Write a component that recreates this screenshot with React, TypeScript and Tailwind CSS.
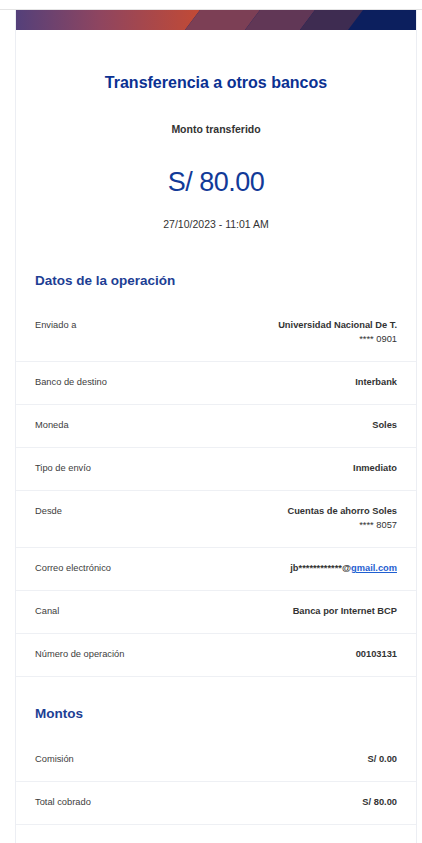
import React from "react";

type Row = { label: string; value: React.ReactNode; sub?: string };

const datos: Row[] = [
  { label: "Enviado a", value: "Universidad Nacional De T.", sub: "**** 0901" },
  { label: "Banco de destino", value: "Interbank" },
  { label: "Moneda", value: "Soles" },
  { label: "Tipo de envío", value: "Inmediato" },
  { label: "Desde", value: "Cuentas de ahorro Soles", sub: "**** 8057" },
  {
    label: "Correo electrónico",
    value: (
      <>
        jb************@
        <span className="text-[#1f5fd1] underline">gmail.com</span>
      </>
    ),
  },
  { label: "Canal", value: "Banca por Internet BCP" },
  { label: "Número de operación", value: "00103131" },
];

const montos: Row[] = [
  { label: "Comisión", value: "S/ 0.00" },
  { label: "Total cobrado", value: "S/ 80.00" },
];

function Banner() {
  return (
    <svg viewBox="0 0 400 20" preserveAspectRatio="none" className="block h-[20px] w-full">
      <defs>
        <linearGradient id="lead" x1="0" y1="0" x2="1" y2="0">
          <stop offset="0" stopColor="#54407a" />
          <stop offset="0.45" stopColor="#8e4560" />
          <stop offset="1" stopColor="#c24a35" />
        </linearGradient>
      </defs>
      <rect x="0" y="0" width="400" height="20" fill="#0c1f5e" />
      <polygon points="0,0 184,0 169,20 0,20" fill="url(#lead)" />
      <polygon points="184,0 244,0 229,20 169,20" fill="#7c3f55" />
      <polygon points="244,0 299,0 284,20 229,20" fill="#613756" />
      <polygon points="299,0 347,0 332,20 284,20" fill="#3e2c51" />
    </svg>
  );
}

function DataRow({ row }: { row: Row }) {
  return (
    <div className="flex justify-between border-b border-[#eef0f4] px-[19px] pt-[13px] pb-[15px] text-[9.3px] leading-[14px]">
      <span className="text-[#3d3d3d]">{row.label}</span>
      <div className="text-right text-[#333333]">
        <div className="font-bold">{row.value}</div>
        {row.sub && <div>{row.sub}</div>}
      </div>
    </div>
  );
}

export default function App() {
  return (
    <div className="min-h-screen bg-white font-['Liberation_Sans',Arial,sans-serif]">
      <div className="h-[10px] border-b border-[#e4e4e4]" />
      <div className="ml-[15px] w-[402px] border-x border-[#eceef3] pb-[40px]">
        <Banner />

        <div className="flex flex-col items-center">
          <h1 className="mt-[43px] text-[16px] leading-[20px] font-bold text-[#0b3192]">
            Transferencia a otros bancos
          </h1>
          <p className="mt-[29px] text-[10.5px] leading-[14px] font-bold text-[#333333]">
            Monto transferido
          </p>
          <p className="mt-[30px] text-[27px] leading-[32px] tracking-[-0.5px] text-[#123a98]">
            S/ 80.00
          </p>
          <p className="mt-[19px] text-[10.5px] leading-[14px] text-[#333333]">
            27/10/2023 - 11:01 AM
          </p>
        </div>

        <h2 className="mt-[41px] mb-[15px] px-[19px] text-[13.5px] leading-[18px] font-bold text-[#1d3e94]">
          Datos de la operación
        </h2>
        {datos.map((r) => (
          <DataRow key={r.label} row={r} />
        ))}

        <h2 className="mt-[28px] mb-[16px] px-[19px] text-[13.5px] leading-[18px] font-bold text-[#1d3e94]">
          Montos
        </h2>
        {montos.map((r) => (
          <DataRow key={r.label} row={r} />
        ))}
      </div>
    </div>
  );
}
